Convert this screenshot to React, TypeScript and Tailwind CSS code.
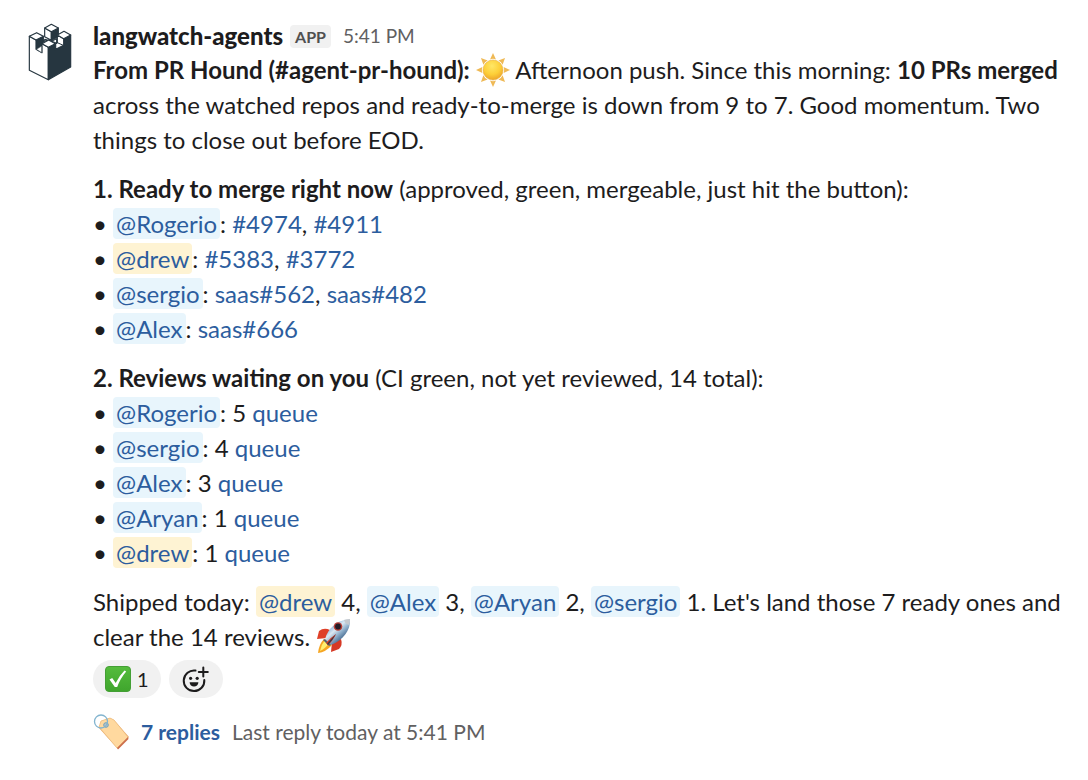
import React from "react";

const readyItems = [
  { name: "Rogerio", links: ["#4974", "#4911"] },
  { name: "drew", self: true, links: ["#5383", "#3772"] },
  { name: "sergio", links: ["saas#562", "saas#482"] },
  { name: "Alex", links: ["saas#666"] },
];

const reviewItems = [
  { name: "Rogerio", count: 5 },
  { name: "sergio", count: 4 },
  { name: "Alex", count: 3 },
  { name: "Aryan", count: 1 },
  { name: "drew", self: true, count: 1 },
];

const Mention: React.FC<{ name: string; self?: boolean }> = ({ name, self }) => (
  <a
    href="#"
    className={`rounded px-[3px] py-px text-[#2c5d9e] ${self ? "bg-[#fef3d3]" : "bg-[#e8f5fc]"}`}
  >
    @{name}
  </a>
);

const TextLink: React.FC<{ children: React.ReactNode }> = ({ children }) => (
  <a href="#" className="text-[#2c5d9e] hover:underline">
    {children}
  </a>
);

const Avatar = () => (
  <svg viewBox="27 36 144 180" className="h-15 w-12 shrink-0" aria-hidden="true">
    <g stroke="#263640" strokeWidth="3.5" strokeLinejoin="round">
      {/* floor between the towers */}
      <path d="M70 96 78 88l19 6 16-8v14l-24-10Z" fill="#fff" />
      {/* back tower */}
      <path d="M77 54 97 65v26l-20-11Z" fill="#fff" />
      <path d="M97 65 118 54v26l-21 11Z" fill="#263640" />
      <path d="M97 43 118 54 97 65 77 54Z" fill="#fff" />
      {/* left tower and wall */}
      <path d="M51 90 73 79v16l-5 11-17 12Z" fill="#263640" />
      <path d="M31 79 51 90v28l18 10v-27l19 11v97L31 181Z" fill="#fff" />
      <path d="M52 118 68 108v20Z" fill="#fff" strokeWidth="2" />
      <path d="M53 68 73 79 51 90 31 79Z" fill="#fff" />
      {/* right tower and wall */}
      <path d="M88 112 109 101v18l25-13V86l21-11v96l-67 38Z" fill="#263640" />
      <path d="M115 75 134 86v20l-24 12v-17l5-3Z" fill="#fff" />
      <path d="M110 102 115 98l18 8" fill="none" strokeWidth="3" />
      <path d="M135 64 155 75 134 86 115 75Z" fill="#fff" />
      {/* front tower */}
      <path d="M89 90 109 101 88 112 69 101Z" fill="#fff" />
    </g>
  </svg>
);

const Sun = () => (
  <svg
    viewBox="0 0 34 34"
    className="-my-2 inline-block h-[34px] w-[34px] align-baseline"
    role="img"
    aria-label="sunny"
  >
    <defs>
      <radialGradient id="sun" cx="45%" cy="30%" r="70%">
        <stop offset="0" stopColor="#ffe766" />
        <stop offset="0.6" stopColor="#fdcf38" />
        <stop offset="1" stopColor="#eda52a" />
      </radialGradient>
    </defs>
    {[0, 45, 90, 135, 180, 225, 270, 315].map((angle) => (
      <path
        key={angle}
        d="M17 0l3 6.4q-3-1.2-6 0Z"
        fill="#efb955"
        transform={`rotate(${angle} 17 17)`}
      />
    ))}
    <circle cx="17" cy="17" r="10" fill="url(#sun)" stroke="#e9ae3c" strokeWidth="0.6" />
  </svg>
);

const Rocket = () => (
  <svg
    viewBox="0 0 36 36"
    className="-my-2 inline-block h-9 w-9 align-baseline"
    role="img"
    aria-label="rocket"
  >
    <defs>
      <linearGradient id="hull" x1="0.2" y1="0.15" x2="0.75" y2="0.8">
        <stop offset="0" stopColor="#5b98d0" />
        <stop offset="0.4" stopColor="#dce8f1" />
        <stop offset="0.65" stopColor="#8eafcb" />
        <stop offset="1" stopColor="#35577f" />
      </linearGradient>
    </defs>
    <path d="M14 12Q8 9 3 13l-2 8 10-1Z" fill="#df4028" />
    <path d="M25 21q2 6-2 10l-8 3 1-10Z" fill="#d63925" />
    <path d="M8 21q-5 5-6 14 8-1 14-8Z" fill="#f6a623" />
    <path d="M9 22q-4 5-5 11 5-2 9-8Z" fill="#ffef70" />
    <path d="M9 21C12 11 20 2 34 1c1 11-7 21-19 26Z" fill="url(#hull)" />
    <path d="M28 2q3-1 6-1 0 3-1 6-4-1-5-5Z" fill="#c5c9ce" />
    <path d="M9 21l6 6-2 1-6-6Z" fill="#54606e" />
    <circle cx="22" cy="8.5" r="4.3" fill="#b93e36" />
    <circle cx="22" cy="8.5" r="2.9" fill="#241d28" />
    <path d="M10 25q4-5 10-9-3 7-8 11Z" fill="#d93b26" />
    <path d="M11 26q4-5 9-10-4 7-8 11Z" fill="#303a48" />
  </svg>
);

const CheckMark = () => (
  <svg viewBox="0 0 26 26" className="h-[26px] w-[26px]" aria-hidden="true">
    <defs>
      <linearGradient id="check" x2="0" y2="1">
        <stop offset="0" stopColor="#55bc3d" />
        <stop offset="1" stopColor="#3fa52d" />
      </linearGradient>
    </defs>
    <rect x="0.5" y="0.5" width="25" height="25" rx="3.5" fill="url(#check)" stroke="#449f35" />
    <path d="M4.5 13.5l2.7-1.5 3.5 5Q14 10 19.5 4.5l1.7 1q-6 7-9 15.5h-2.4Z" fill="#fff" />
  </svg>
);

const AddReaction = () => (
  <svg
    viewBox="0 0 28 28"
    className="h-7 w-7"
    fill="none"
    stroke="#1d1c1d"
    strokeWidth="2"
    strokeLinecap="round"
    aria-hidden="true"
  >
    <path d="M13.5 5.6A10.3 10.3 0 1 0 22.3 15" />
    <path d="M21.3 2.5v9M16.8 7h9" />
    <circle cx="8.6" cy="13.3" r="1.6" fill="#1d1c1d" stroke="none" />
    <circle cx="15.2" cy="13.3" r="1.6" fill="#1d1c1d" stroke="none" />
    <path d="M7.6 17.2h8.8c0 5.6-8.8 5.6-8.8 0Z" fill="#1d1c1d" stroke="none" />
  </svg>
);

const LabelTag = () => (
  <svg viewBox="0 0 36 36" className="h-9 w-9" aria-hidden="true">
    <path d="M6 14l2-7 9-3 4 2 15 17-11 12Z" fill="#e8a86e" />
    <path d="M6 13l2-6 9-3 4 2 14 17-11 11Z" fill="#ffd99f" stroke="#edbb7c" strokeWidth="0.7" />
    <path d="M35 23 24 34l1 1.5L35.5 25Z" fill="#cd704d" />
    <circle cx="13" cy="11" r="2.3" fill="#b8c5cb" stroke="#71a1ba" />
    <circle cx="8" cy="7.5" r="6.5" fill="none" stroke="#82b4cf" strokeWidth="1.3" />
  </svg>
);

const App: React.FC = () => {
  return (
    <main
      className="flex min-h-screen gap-[17px] bg-white pt-5 pr-6 pl-7 text-2xl text-[#1d1c1d]"
      style={{ fontFamily: 'Lato, "Liberation Sans", sans-serif' }}
    >
      <div className="pt-[2px]">
        <Avatar />
      </div>
      <article className="min-w-0 flex-1">
        <header className="flex h-8 items-center">
          <h1 className="font-black">langwatch-agents</h1>
          <span className="ml-[7px] rounded bg-[#f1f1f1] px-[5px] text-base leading-[23px] font-bold text-[#505050]">
            APP
          </span>
          <time className="ml-3 text-[19px] text-[#616061]">5:41 PM</time>
        </header>

        <div className="flex flex-col gap-[14px] leading-[35px]">
          <p>
            <b>From PR Hound (#agent-pr-hound):</b> <Sun /> Afternoon push. Since this morning:{" "}
            <b>10 PRs merged</b> across the watched repos and ready-to-merge is down from 9 to 7.
            Good momentum. Two things to close out before EOD.
          </p>

          <section>
            <p>
              <b>1. Ready to merge right now</b> (approved, green, mergeable, just hit the button):
            </p>
            <ul>
              {readyItems.map((item) => (
                <li key={item.name}>
                  • <Mention name={item.name} self={item.self} />:{" "}
                  {item.links.map((link, index) => (
                    <React.Fragment key={link}>
                      {index > 0 && ", "}
                      <TextLink>{link}</TextLink>
                    </React.Fragment>
                  ))}
                </li>
              ))}
            </ul>
          </section>

          <section>
            <p>
              <b>2. Reviews waiting on you</b> (CI green, not yet reviewed, 14 total):
            </p>
            <ul>
              {reviewItems.map((item) => (
                <li key={item.name}>
                  • <Mention name={item.name} self={item.self} />: {item.count}{" "}
                  <TextLink>queue</TextLink>
                </li>
              ))}
            </ul>
          </section>

          <p>
            Shipped today: <Mention name="drew" self /> 4, <Mention name="Alex" /> 3,{" "}
            <Mention name="Aryan" /> 2, <Mention name="sergio" /> 1. Let's land those 7 ready ones
            and clear the 14 reviews. <Rocket />
          </p>
        </div>

        <div className="mt-1.5 flex gap-2">
          <button className="flex h-[38px] items-center gap-1.5 rounded-full bg-[#f1f1f1] px-3 text-xl">
            <CheckMark />1
          </button>
          <button
            aria-label="Add reaction"
            className="flex h-[38px] items-center rounded-full bg-[#f1f1f1] px-[13px]"
          >
            <AddReaction />
          </button>
        </div>

        <footer className="mt-4 flex items-center text-[21px]">
          <LabelTag />
          <a href="#" className="ml-3 font-bold text-[#2c5d9e]">
            7 replies
          </a>
          <span className="ml-3 text-[#616061]">Last reply today at 5:41 PM</span>
        </footer>
      </article>
    </main>
  );
};

export default App;
